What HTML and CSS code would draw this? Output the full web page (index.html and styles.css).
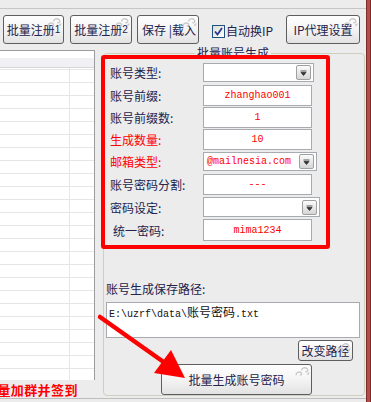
FILE: index.html
```html
<!DOCTYPE html>
<html lang="zh">
<head>
    <meta charset="UTF-8">
    <link rel="stylesheet" href="styles.css">
    <title>批量账号生成</title>
</head>
<body>
    <div class="window">
        <div class="app">
            <div class="topline"></div>
            <div class="toolbar">
                <button class="btn btn-reg1">批量注册<small>1</small><svg class="curl" viewBox="0 0 16 12"><path d="M1 10c0-3 3-4 5-3s1 3-1 3M7 5c0-3 4-4 6-2s0 4-2 3M13 9c1 0 2-1 2-2" fill="none" stroke="#cacaca" stroke-width="1.5"/></svg></button>
                <button class="btn btn-reg2">批量注册<small>2</small><svg class="curl" viewBox="0 0 16 12"><path d="M1 10c0-3 3-4 5-3s1 3-1 3M7 5c0-3 4-4 6-2s0 4-2 3M13 9c1 0 2-1 2-2" fill="none" stroke="#cacaca" stroke-width="1.5"/></svg></button>
                <button class="btn btn-save">保存 |载入<svg class="curl" viewBox="0 0 16 12"><path d="M1 10c0-3 3-4 5-3s1 3-1 3M7 5c0-3 4-4 6-2s0 4-2 3M13 9c1 0 2-1 2-2" fill="none" stroke="#cacaca" stroke-width="1.5"/></svg></button>
                <span class="check"><svg viewBox="0 0 11 11"><path d="M2 5.5l2.5 3L9 2" fill="none" stroke="#2b3a8c" stroke-width="1.8"/></svg></span>
                <span class="check-label">自动换IP</span>
                <button class="btn btn-ip">IP代理设置<svg class="curl" viewBox="0 0 16 12"><path d="M1 10c0-3 3-4 5-3s1 3-1 3M7 5c0-3 4-4 6-2s0 4-2 3M13 9c1 0 2-1 2-2" fill="none" stroke="#cacaca" stroke-width="1.5"/></svg></button>
            </div>

            <div class="content">
                <div class="left">
                    <div class="list">
                        <div class="list-head"></div>
                        <div class="list-body"></div>
                    </div>
                    <div class="tip">批量加群并签到</div>
                </div>

                <div class="group">
                    <div class="group-title"><span>批量账号生成</span></div>
                    <div class="redbox">
                        <div class="row r1">
                            <label>账号类型:</label>
                            <div class="combo w111"><span class="drop"><svg viewBox="0 0 13 13"><path d="M3.5 5h6M4 6.5h5l-2.5 3z" fill="#333" stroke="#333" stroke-width="0.8"/></svg></span></div>
                        </div>
                        <div class="row r2">
                            <label>账号前缀:</label>
                            <div class="field">zhanghao001</div>
                        </div>
                        <div class="row r3">
                            <label>账号前缀数:</label>
                            <div class="field">1</div>
                        </div>
                        <div class="row r4">
                            <label class="red">生成数量:</label>
                            <div class="field">10</div>
                        </div>
                        <div class="row r5">
                            <label class="red">邮箱类型:</label>
                            <div class="combo w114"><span class="combo-text">@mailnesia.com</span><span class="drop"><svg viewBox="0 0 13 13"><path d="M3.5 5h6M4 6.5h5l-2.5 3z" fill="#333" stroke="#333" stroke-width="0.8"/></svg></span></div>
                        </div>
                        <div class="row r6">
                            <label>账号密码分割:</label>
                            <div class="field">---</div>
                        </div>
                        <div class="row r7">
                            <label>密码设定:</label>
                            <div class="combo w117"><span class="drop"><svg viewBox="0 0 13 13"><path d="M3.5 5h6M4 6.5h5l-2.5 3z" fill="#333" stroke="#333" stroke-width="0.8"/></svg></span></div>
                        </div>
                        <div class="row r8">
                            <label class="indent">统一密码:</label>
                            <div class="field">mima1234</div>
                        </div>
                    </div>

                    <div class="path-label">账号生成保存路径:</div>
                    <div class="path-box">E:\uzrf\data\<span class="cjk">账号密码</span>.txt</div>
                    <div class="path-actions">
                        <button class="btn btn-small">改变路径<svg class="curl" viewBox="0 0 16 12"><path d="M1 10c0-3 3-4 5-3s1 3-1 3M7 5c0-3 4-4 6-2s0 4-2 3M13 9c1 0 2-1 2-2" fill="none" stroke="#cacaca" stroke-width="1.5"/></svg></button>
                    </div>
                    <button class="btn btn-big">批量生成账号密码<svg class="curl" viewBox="0 0 16 12"><path d="M1 10c0-3 3-4 5-3s1 3-1 3M7 5c0-3 4-4 6-2s0 4-2 3M13 9c1 0 2-1 2-2" fill="none" stroke="#cacaca" stroke-width="1.5"/></svg></button>
                </div>
            </div>
            <div class="status"></div>
        </div>
        <div class="edge"></div>

        <!-- annotation arrow drawn over the form -->
        <svg class="arrow" width="371" height="402" viewBox="0 0 371 402">
            <line x1="100" y1="317" x2="165" y2="363" stroke="#ff0000" stroke-width="4.5" stroke-linecap="round"/>
            <polygon points="185,378 154,373 171,350" fill="#ff0000"/>
        </svg>
    </div>
</body>
</html>
```

FILE: styles.css
```css
body {
    margin: 0;
    background-color: #ececec;
    font-family: "Noto Sans CJK SC", sans-serif;
    font-size: 12px;
    color: #23234d;
    overflow: hidden;
}

.window {
    position: relative;
    display: flex;
    width: 371px;
    height: 402px;
    overflow: hidden;
}

.app {
    flex: 1;
    display: flex;
    flex-direction: column;
    min-width: 0;
}

.edge {
    width: 3px;
    background-color: #b44c48;
    border-left: 1px solid #7c2b29;
    border-right: 1px solid #7c2b29;
}

.topline {
    height: 8px;
    border-bottom: 1px solid #c6c6c6;
}

/* toolbar */

.toolbar {
    display: flex;
    align-items: center;
    height: 29px;
    margin: 6px 0;
    padding-left: 3px;
}

.btn {
    position: relative;
    height: 29px;
    padding: 0;
    border: 1px solid #5e5e5e;
    border-radius: 3px;
    background: linear-gradient(#fefefe, #f4f4f4 50%, #e2e2e2);
    font-family: "Noto Sans CJK SC", sans-serif;
    font-size: 12px;
    color: #23234d;
    line-height: 14px;
    white-space: nowrap;
}

.btn small {
    font-family: "Liberation Sans", sans-serif;
    font-size: 10px;
    vertical-align: 2px;
}

.btn .curl {
    position: absolute;
    top: 1px;
    right: 1px;
    width: 15px;
    height: 11px;
}

.btn-reg1 {
    width: 61px;
    margin-right: 6px;
}

.btn-reg2 {
    width: 62px;
    margin-right: 5px;
}

.btn-save {
    width: 62px;
    text-align: left;
    padding-left: 4px;
}

.check {
    display: flex;
    width: 11px;
    height: 11px;
    margin: 3px 0 0 13px;
    border: 1px solid #1c5180;
    background: linear-gradient(135deg, #dcdcd5, #ffffff);
}

.check svg {
    width: 11px;
    height: 11px;
}

.check-label {
    margin: 2px 0 0 1px;
}

.btn-ip {
    width: 74px;
    margin-left: auto;
    margin-right: 6px;
}

/* main area */

.content {
    display: flex;
    align-items: flex-start;
    height: 348px;
}

.left {
    width: 95px;
    flex-shrink: 0;
}

.list {
    height: 322px;
    padding-top: 7px;
    border-top: 1px solid #9c9c9c;
    border-right: 1px solid #9c9c9c;
    background-color: #fff;
    display: flex;
    flex-direction: column;
}

.list-head {
    height: 9px;
    background-color: #f1f1f5;
    border-bottom: 1px solid #d6d6d6;
}

.list-body {
    flex: 1;
    background:
        linear-gradient(to right, transparent 69px, #e6e6e6 69px, #e6e6e6 70px, transparent 70px),
        repeating-linear-gradient(to bottom, transparent 0 1px, #e6e6e6 1px 2px, transparent 2px 13px);
}

.tip {
    margin: 1px 0 0 -16px;
    line-height: 17px;
    font-size: 13px;
    font-weight: bold;
    color: #ff0000;
    white-space: nowrap;
    letter-spacing: 0.4px;
}

.group {
    box-sizing: border-box;
    width: 262px;
    height: 343px;
    margin: 3px 0 0 8px;
    padding: 0 4px 0 2px;
    border: 1px solid #cfcfc0;
    border-radius: 4px;
}

.group-title {
    margin-top: -8px;
    line-height: 14px;
    text-align: center;
}

.group-title span {
    padding: 0 2px;
    background-color: #ececec;
}

.redbox {
    position: relative;
    box-sizing: border-box;
    width: 229px;
    margin: -5px 0 0 -5px;
    padding-bottom: 4px;
    border: 4px solid #ff0000;
    border-radius: 3px;
}

.row {
    display: flex;
    align-items: center;
    padding-left: 5px;
}

.row label {
    width: 93px;
    flex-shrink: 0;
}

.row label.red {
    color: #ff0000;
}

.row label.indent {
    width: 90px;
    padding-left: 3px;
}

.r1 { margin-top: 4px; height: 19px; }
.r2 { margin-top: 3px; height: 21px; }
.r3 { margin-top: 1px; height: 21px; }
.r4 { margin-top: 1px; height: 21px; }
.r5 { margin-top: 2px; height: 19px; }
.r6 { margin-top: 3px; height: 21px; }
.r7 { margin-top: 2px; height: 20px; }
.r8 { margin-top: 2px; height: 22px; }

.field {
    box-sizing: border-box;
    width: 109px;
    height: 100%;
    border: 1px solid #a7abb0;
    background-color: #fff;
    color: #ff0000;
    font-family: "Liberation Mono", monospace;
    font-size: 10px;
    text-align: center;
    display: flex;
    align-items: center;
    justify-content: center;
}

.combo {
    box-sizing: border-box;
    height: 100%;
    display: flex;
    align-items: center;
    padding: 0 2px 0 3px;
    border: 1px solid #a7abb0;
    background-color: #fff;
}

.w111 { width: 111px; }
.w114 { width: 114px; }
.w117 { width: 117px; }

.combo-text {
    flex: 1;
    color: #ff0000;
    font-family: "Liberation Mono", monospace;
    font-size: 10px;
}

.drop {
    box-sizing: border-box;
    width: 15px;
    height: 15px;
    margin-left: auto;
    border: 1px solid #a0a0a0;
    border-radius: 2px;
    background: linear-gradient(#fbfbfb, #d6d6d6);
    display: flex;
}

.drop svg {
    width: 13px;
    height: 13px;
}

.path-label {
    margin-top: 33px;
    line-height: 14px;
}

.path-box {
    box-sizing: border-box;
    height: 36px;
    margin-top: 6px;
    padding: 2px 2px;
    border: 1px solid #a7abb0;
    background-color: #fff;
    font-family: "Liberation Mono", monospace;
    font-size: 10px;
    line-height: 14px;
    color: #111;
}

.path-box .cjk {
    font-family: "Noto Sans CJK SC", sans-serif;
    font-size: 12px;
}

.path-actions {
    display: flex;
    justify-content: flex-end;
    margin-top: 2px;
    padding-right: 7px;
}

.btn-small {
    width: 55px;
    height: 21px;
}

.btn-big {
    display: block;
    width: 151px;
    height: 31px;
    margin: 3px 0 0 55px;
}

.status {
    flex: 1;
    border-top: 1px solid #bdbdbd;
}

.arrow {
    position: absolute;
    top: 0;
    left: 0;
    pointer-events: none;
}
```
